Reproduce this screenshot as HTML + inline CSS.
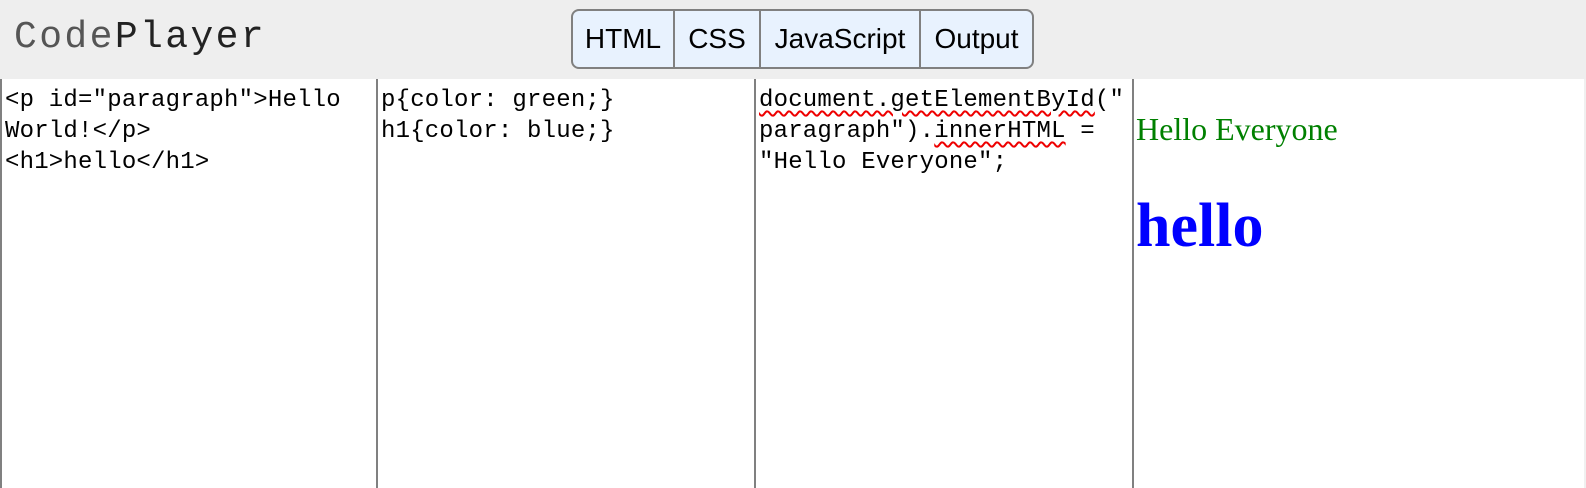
<!DOCTYPE html>
<html><head><meta charset="utf-8"><style>
*{margin:0;padding:0;box-sizing:border-box}
body{width:1586px;height:488px;overflow:hidden;background:#fff;position:relative;font-family:"Liberation Sans",sans-serif}
#hdr{position:absolute;left:0;top:0;width:1586px;height:79px;background:#eeeeee}
#logo{position:absolute;left:14px;top:14px;font-family:"Liberation Mono",monospace;font-size:38px;letter-spacing:2.4px;line-height:48px}
#logo .c{color:#555}
#logo .p{color:#222}
#tb{position:absolute;left:571px;top:9px;width:463px;height:60px;border:2px solid #808080;border-radius:8px;background:#e8f2fe;display:flex;overflow:hidden}
#tb div{height:100%;border-right:2px solid #808080;font-size:28px;line-height:56px;text-align:center;color:#000}
#tb div:last-child{border-right:none}
.pn{position:absolute;top:79px;height:409px;background:#fff}
.code{font-family:"Liberation Mono",monospace;font-size:24px;letter-spacing:0.2px;line-height:31px;color:#000;padding:6px 0 0 3px;white-space:pre}
.sq{text-decoration:underline wavy #e00;text-decoration-thickness:1.5px;text-underline-offset:4px}
.bl{position:absolute;top:79px;width:2px;height:409px;background:#808080}
</style></head><body>
<div id="hdr">
<div id="logo"><span class="c">Code</span><span class="p">Player</span></div>
<div id="tb"><div style="width:102px">HTML</div><div style="width:86px">CSS</div><div style="width:160px">JavaScript</div><div style="flex:1">Output</div></div>
</div>
<div class="bl" style="left:0"></div>
<div class="pn code" style="left:2px;width:374px">&lt;p id="paragraph"&gt;Hello
World!&lt;/p&gt;
&lt;h1&gt;hello&lt;/h1&gt;</div>
<div class="bl" style="left:376px"></div>
<div class="pn code" style="left:378px;width:376px">p{color: green;}
h1{color: blue;}</div>
<div class="bl" style="left:754px"></div>
<div class="pn code" style="left:756px;width:376px"><span class="sq">document.getElementById</span>("
paragraph").<span class="sq">innerHTML</span> =
"Hello Everyone";</div>
<div class="bl" style="left:1132px"></div>
<div class="pn" style="left:1134px;width:450px;font-family:'Liberation Serif',serif">
<div style="position:absolute;left:2px;top:30px;font-size:32px;color:green;line-height:40px">Hello Everyone</div>
<div style="position:absolute;left:2px;top:112px;font-size:62px;font-weight:bold;color:blue;line-height:70px">hello</div>
</div>
<div style="position:absolute;left:1584px;top:79px;width:2px;height:409px;background:#f0f0f0"></div>
</body></html>
